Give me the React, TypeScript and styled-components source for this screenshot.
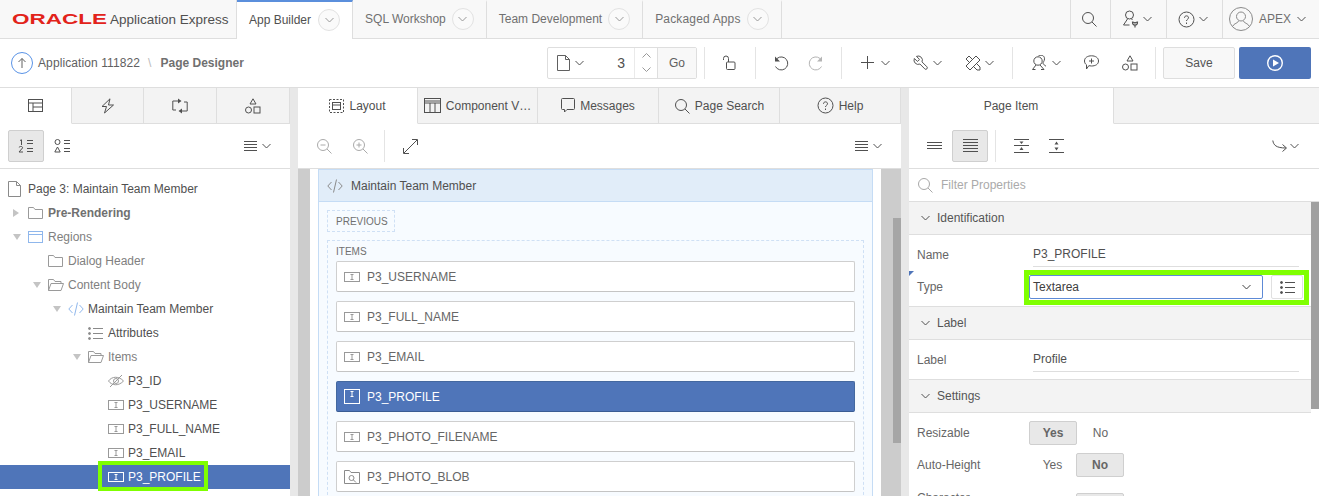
import React from 'react'
import styled, { createGlobalStyle } from 'styled-components'

const GlobalStyle = createGlobalStyle`
html, body { margin:0; padding:0; }
body {
  width:1319px;
  height:496px;
  overflow:hidden;
  background:#fff;
  font-family:"Liberation Sans", Arial, sans-serif;
  font-size:12px;
  color:#404040;
}
* { box-sizing:border-box; }
`

const BLUE = '#4f75b9'
const LIME = '#7fff00'

/* ---------- icons ---------- */
type IcoProps = { w?: number; h?: number; c?: string; children?: React.ReactNode }
const Ico = ({ w = 16, h = 16, c = '#505050', children }: IcoProps) => (
  <svg width={w} height={h} viewBox={`0 0 ${w} ${h}`} fill="none" stroke={c} strokeWidth={1} style={{ display: 'block', flex: 'none' }}>
    {children}
  </svg>
)
type C = { c?: string }
const Chevron = ({ c = '#505050' }: C) => <Ico w={9} h={6} c={c}><path d="M.5 1 4.5 5 8.500 1" /></Ico>
const SearchIco = ({ c = '#505050' }: C) => <Ico c={c}><circle cx="7" cy="7" r="5.500" /><path d="M11 11l4.500 4.500" /></Ico>
const HelpIco = () => <Ico w={17} h={17}><circle cx="8.500" cy="8.500" r="7.500" /><path d="M6.500 6.800c0-2.600 4-2.600 4 0 0 1.500-2 1.500-2 3.200" /><path d="M8.500 11.500v1.500" /></Ico>
const UserServiceIco = () => (
  <Ico w={16} h={18}>
    <circle cx="6.500" cy="5" r="4" /><path d="M4.500 9 .5 15h6M8.500 9l1 1" />
    <path d="M9.500 12c0 2 .8 3.200 2.500 3.200s2.500-1.200 2.500-3.200c-1 0-1.500.3-2.500 1-1-.7-1.500-1-2.500-1zM12 15v2.500" strokeWidth={1.200} />
  </Ico>
)
const AvatarIco = () => (
  <Ico w={24} h={24} c="#8a8a8a">
    <circle cx="12" cy="12" r="11.500" /><circle cx="12" cy="9.500" r="4.500" />
    <path d="M9.500 14c0 2-5 2.500-5.500 5M14.500 14c0 2 5 2.500 5.500 5" />
  </Ico>
)
const UpCircleIco = () => (
  <Ico w={22} h={22} c="#5a93e6">
    <circle cx="11" cy="11" r="10.500" /><path d="M11 16V6.500M7.500 10l3.500-3.500 3.500 3.500" stroke="#606060" />
  </Ico>
)
const PageIco = ({ c = '#606060' }: C) => <Ico w={13} h={16} c={c}><path d="M.5.500h8l4 4v11H.500zM8.500.500v4h4" /></Ico>
const LockIco = () => <Ico><path d="M1.500 5V3.500a2.500 2.500 0 0 1 5 0V7" /><rect x="4.500" y="7" width="8.500" height="7.500" rx="1" /></Ico>
const UndoIco = ({ c = '#505050' }: C) => <Ico c={c}><path d="M4 3.500a6.500 6.500 0 1 1-1.500 8" /><path d="M2 1.500v5h5z" fill={c} stroke="none" /></Ico>
const RedoIco = ({ c = '#505050' }: C) => <Ico c={c}><path d="M12 3.500a6.500 6.500 0 1 0 1.500 8" /><path d="M14 1.500v5H9z" fill={c} stroke="none" /></Ico>
const PlusIco = () => <Ico w={16} h={13}><path d="M6.500 0v13M0 6.500h13" /></Ico>
const WrenchIco = () => (
  <Ico>
    <g transform="translate(16.400 -.4) scale(-.7 .7)" strokeWidth={1.400}>
      <path d="M14.700 6.300a1 1 0 0 0 0 1.400l1.600 1.600a1 1 0 0 0 1.400 0l3.770-3.770a6 6 0 0 1-7.940 7.940l-6.910 6.910a2.120 2.120 0 0 1-3-3l6.910-6.910a6 6 0 0 1 7.940-7.940l-3.760 3.760z" />
    </g>
  </Ico>
)
const DrawIco = () => (
  <Ico>
    <path d="M11 1l4 4L5 15l-4-4z" />
    <path d="M4.500 7.500 1 4l3-3 3.500 3.500M11.500 8.500 15 12v3h-3L8.500 11.500" />
  </Ico>
)
const PeopleIco = () => (
  <Ico w={16} h={16}>
    <circle cx="6" cy="6" r="4.200" /><path d="M4 10 .5 14.500h3M8 10l4 4.500H9" />
    <path d="M6.500.800c3-1 6-.5 6 3 0 2.500-1.500 3-1.500 4.500 0 1 1.500 1.500 3 3" />
  </Ico>
)
const CommentAddIco = () => (
  <Ico w={15} h={15}>
    <path d="M7.500.800c3.800 0 7 1.800 7 5.200s-3.200 5-7 5c-.9 0-1.800-.1-2.700-.3L2.500 14V9.800C1.300 9 .5 7.700.5 6 .5 2.600 3.700.800 7.500.800z" />
    <path d="M7.500 3.500v5M5 6h5" />
  </Ico>
)
const ShapesIco = ({ c = '#505050' }: C) => (
  <Ico w={16} h={16} c={c}><path d="M8 .800 11 6H5z" /><circle cx="3.500" cy="12" r="3" /><rect x="9" y="9" width="6" height="6" /></Ico>
)
const TreeTabIco = () => <Ico w={15} h={13}><rect x=".5" y=".5" width="14" height="12" /><path d="M.5 4h14M5 4v8.500M5 8h9.500" /></Ico>
const BoltIco = () => <Ico w={14} h={16}><path d="M9 .800 1 8.500h4.500L3.500 15l9-8H7.500z" /></Ico>
const ProcessIco = () => (
  <Ico w={16} h={16}>
    <path d="M6 3H.800v9H4M10 13h5.200V4H12" />
    <path d="M6 .500 9.500 3 6 5.500zM10 10.500 6.500 13l3.500 2.500z" fill="#505050" stroke="none" />
  </Ico>
)
const NumberListIco = () => (
  <Ico w={16} h={14}>
    <path d="M2 1.500 3.500.800v5.200M9 1.500h6M9 4.500h6M1 8.500c.5-1.500 4-1.500 3.500.5L1 13h4M9 9.500h6M9 12.500h6" />
  </Ico>
)
const TypeListIco = () => (
  <Ico w={16} h={14}>
    <circle cx="3.500" cy="3" r="2.500" /><path d="M3.500 8 .8 13h5.400zM10 1.500h6M10 4.500h6M10 9.500h6M10 12.500h6" />
  </Ico>
)
const MenuIco = () => <Ico w={13} h={11}><path d="M0 .5h13M0 3.500h13M0 6.500h13M0 9.500h13" /></Ico>
const ZoomIco = ({ plus }: { plus?: boolean }) => (
  <Ico c="#aaaaaa"><circle cx="7" cy="7" r="5.500" /><path d="M11 11l4.500 4.500M4.500 7h5" />{plus && <path d="M7 4.500v5" />}</Ico>
)
const ExpandIco = () => <Ico w={15} h={15}><path d="M1 14 14 1M9 .500h5.500V6M.5 9v5.500H6" /></Ico>
const LayoutIco = () => <Ico w={15} h={14}><rect x=".5" y=".5" width="14" height="13" strokeDasharray="2 1.500" /><rect x="3.500" y="3.500" width="8" height="7" /><path d="M3.500 6h8" /></Ico>
const GridIco = () => <Ico w={17} h={15}><rect x=".5" y=".5" width="16" height="14" /><path d="M.5 3h16M.5 5h16M6 5v9.500M11 5v9.500" /></Ico>
const MessageIco = () => <Ico w={14} h={15}><path d="M1.500.500h11a1 1 0 0 1 1 1v9a1 1 0 0 1-1 1H6L3.500 14v-2.500h-2a1 1 0 0 1-1-1v-9a1 1 0 0 1 1-1z" /></Ico>
const HeightOneIco = () => <Ico w={15} h={8}><path d="M0 .5h15M0 3.500h15M0 6.500h15" /></Ico>
const HeightTwoIco = () => <Ico w={15} h={14}><path d="M0 .5h15M0 3.500h15M0 6.500h15M0 9.500h15M0 12.500h15" /></Ico>
const CollapseIco = () => (
  <Ico w={15} h={14}><path d="M0 .5h15M0 6.500h15M0 13.500h15" /><path d="M7.500 5 5.500 2.500h4zM7.500 8l2 3h-4z" fill="#505050" stroke="none" /></Ico>
)
const ExpandAllIco = () => (
  <Ico w={15} h={14}><path d="M0 .5h15M0 13.500h15" /><path d="M7.500 2.500l2 3h-4zM7.500 11.500l-2-3h4z" fill="#505050" stroke="none" /></Ico>
)
const GotoIco = () => <Ico w={15} h={13}><path d="M.8.500C1.500 5 4 8 14 8M10.500 4.500 14.500 8l-4 3.500" /></Ico>
const CodeIco = ({ c = '#8fb7ec' }: C) => <Ico w={16} h={16} c={c}><path d="M4.500 4 .8 8l3.700 4M11.500 4l3.700 4-3.700 4M9.500 1.500l-3 13" /></Ico>
const FolderIco = () => <Ico w={15} h={12} c="#9a9a9a"><path d="M.5 11.500V.500h5l1.500 2h7.500v9z" /></Ico>
const FolderOpenIco = () => <Ico w={16} h={12} c="#9a9a9a"><path d="M.5 11.500V.500h5l1.500 2h6v2M.5 11.500l2.500-7h12.500l-2.500 7z" /></Ico>
const RegionIco = () => <Ico w={15} h={12} c="#8fb7ec"><rect x=".5" y=".5" width="14" height="11" /><path d="M.5 3.500h14" /></Ico>
const AttributesIco = ({ c = '#8a8a8a' }: C) => (
  <Ico w={15} h={13} c={c}>
    <path d="M5 1.500h10M5 6.500h10M5 11.500h10" />
    <circle cx="1.500" cy="1.500" r="1" fill={c} /><circle cx="1.500" cy="6.500" r="1" fill={c} /><circle cx="1.500" cy="11.500" r="1" fill={c} />
  </Ico>
)
const HiddenIco = () => (
  <Ico w={16} h={12} c="#9a9a9a"><path d="M.5 6C4 1 11 1 15.500 6 11 11 4 11 .500 6z" /><circle cx="8" cy="6" r="2.500" /><path d="M2 12 14 0" /></Ico>
)
const ItemIco = ({ c = '#999999' }: C) => (
  <Ico w={16} h={10} c={c}><rect x=".5" y=".5" width="15" height="9" /><path d="M6.500 2.500h3M8 2.500v5M6.500 7.500h3" /></Ico>
)
const ItemTallIco = () => (
  <Ico w={16} h={15} c="#ffffff"><rect x=".5" y=".5" width="15" height="14" /><path d="M6.500 2.500h3M8 2.500v5M6.500 7.500h3" /></Ico>
)
const PopupIco = () => (
  <Ico w={16} h={14} c="#8a8a8a"><path d="M.5 13.500V.500h5l1.500 2h8.500v11z" /><circle cx="7.500" cy="8" r="2.500" /><path d="M9.500 10l2.500 2.500" /></Ico>
)

/* ---------- top bar ---------- */
const TopBar = styled.div`
display:flex;
height:39px;
background:#f8f8f8;
border-bottom:1px solid #dedede;
`
const Brand = styled.div`
width:237px;
display:flex;
align-items:center;
padding-left:12px;
border-right:1px solid #dedede;
`
const OracleMark = styled.span`
display:inline-block;
width:65px;
margin-right:33px;
font-size:15.5px;
font-weight:bold;
line-height:1;
color:#e2231a;
transform:scaleX(1.45);
transform-origin:left center;
`
const ProductName = styled.span`
font-size:13.5px;
color:#505050;
white-space:nowrap;
`
const NavTab = styled.div<{ $active?: boolean; $wide?: boolean }>`
display:flex;
align-items:center;
gap:${({ $active }) => ($active ? 7 : 6)}px;
padding:0 12px;
letter-spacing:${({ $wide }) => ($wide ? '.16px' : 'normal')};
color:${({ $active }) => ($active ? '#505050' : '#707070')};
background:${({ $active }) => ($active ? '#fff' : 'transparent')};
border-right:1px solid #dedede;
border-top:2px solid ${({ $active }) => ($active ? '#5b8fdc' : 'transparent')};
height:${({ $active }) => ($active ? '39px' : '38px')};
padding-bottom:2px;
`
const CircleChevron = styled.span`
width:22px;
height:22px;
border-radius:50%;
border:1px solid #e2e2e2;
background:#fafafa;
display:flex;
align-items:center;
justify-content:center;
`
const NavTools = styled.div`
margin-left:auto;
display:flex;
`
const NavTool = styled.div<{ $w: number; $pr?: number }>`
width:${({ $w }) => $w}px;
border-left:1px solid #dedede;
display:flex;
align-items:center;
justify-content:center;
gap:4px;
padding-right:${({ $pr }) => $pr ?? 3}px;
`
const UserName = styled.span`
margin:0 2px;
color:#707070;
`

/* ---------- main toolbar ---------- */
const Toolbar = styled.div`
display:flex;
align-items:center;
justify-content:space-between;
height:49px;
padding:0 8px 1px 11px;
border-bottom:1px solid #dedede;
background:#fff;
`
const Crumbs = styled.div`
display:flex;
align-items:center;
color:#606060;
`
const CrumbLink = styled.span`
margin-left:5px;
letter-spacing:.1px;
`
const CrumbSep = styled.span`
margin:0 9px 0 8px;
color:#bbb;
`
const CrumbCurrent = styled.span`
font-weight:bold;
color:#707070;
`
const Actions = styled.div`
display:flex;
align-items:center;
`
const PageGroup = styled.div`
display:flex;
width:150px;
height:32px;
border:1px solid #dedede;
border-radius:2px;
margin-right:7px;
`
const PagePicker = styled.div`
width:86px;
display:flex;
align-items:center;
gap:5px;
padding-left:9px;
`
const PageNumber = styled.span`
margin-left:auto;
padding-right:9px;
font-size:14px;
color:#505050;
`
const Spinner = styled.div`
width:24px;
border-left:1px solid #eaeaea;
border-right:1px solid #dedede;
display:flex;
flex-direction:column;
align-items:center;
justify-content:center;
gap:9px;
`
const GoButton = styled.div`
flex:1;
background:#f8f8f8;
display:flex;
align-items:center;
justify-content:center;
color:#606060;
`
const VRule = styled.span<{ $h?: number; $ml?: number }>`
width:1px;
height:${({ $h }) => $h ?? 32}px;
margin-left:${({ $ml }) => $ml ?? 0}px;
background:#e4e4e4;
flex:none;
`
const ToolSection = styled.div<{ $w: number; $pad?: number; $gap?: number; $center?: boolean }>`
width:${({ $w }) => $w}px;
display:flex;
align-items:center;
justify-content:${({ $center }) => ($center ? 'center' : 'flex-start')};
padding-left:${({ $pad }) => $pad ?? 0}px;
gap:${({ $gap }) => $gap ?? 0}px;
`
const ToolButton = styled.span<{ $w?: number }>`
display:flex;
align-items:center;
justify-content:center;
gap:4px;
width:${({ $w }) => ($w ? `${$w}px` : 'auto')};
`
const SaveButton = styled.div`
width:72px;
height:32px;
margin-left:7px;
background:#f8f8f8;
border:1px solid #dedede;
border-radius:2px;
display:flex;
align-items:center;
justify-content:center;
color:#555;
`
const RunButton = styled.div`
width:72px;
height:32px;
margin-left:4px;
background:${BLUE};
border-radius:2px;
display:flex;
align-items:center;
justify-content:center;
`

/* ---------- panels ---------- */
const Workspace = styled.div`
display:grid;
grid-template-columns:290px 8px 603px 8px 410px;
height:408px;
overflow:hidden;
`
const Gutter = styled.div`
background:#e8e8e8;
`
const Panel = styled.div`
position:relative;
display:flex;
flex-direction:column;
min-width:0;
height:408px;
overflow:hidden;
background:#fff;
`
const TabStrip = styled.div<{ $cols: string }>`
display:grid;
grid-template-columns:${({ $cols }) => $cols};
height:36px;
flex:none;
`
const PanelTab = styled.div<{ $active?: boolean }>`
display:flex;
align-items:center;
justify-content:center;
gap:5px;
min-width:0;
white-space:nowrap;
overflow:hidden;
color:#505050;
background:${({ $active }) => ($active ? '#fff' : '#f3f3f3')};
border-right:1px solid #dedede;
border-bottom:1px solid ${({ $active }) => ($active ? '#fff' : '#dedede')};
`
const EmptyTab = styled.div`
background:#f3f3f3;
border-bottom:1px solid #dedede;
`
const SubToolbar = styled.div<{ $pad?: number }>`
display:flex;
align-items:center;
height:45px;
flex:none;
padding:0 ${({ $pad }) => $pad ?? 19}px 0 8px;
border-bottom:1px solid #dedede;
`
const IconToggle = styled.div<{ $on?: boolean; $w?: number }>`
width:${({ $w }) => $w ?? 36}px;
height:32px;
flex:none;
display:flex;
align-items:center;
justify-content:center;
border-radius:2px;
background:${({ $on }) => ($on ? '#e8e8e8' : 'transparent')};
border:1px solid ${({ $on }) => ($on ? '#cfcfcf' : 'transparent')};
`
const PushRight = styled.div<{ $gap?: number }>`
margin-left:auto;
display:flex;
align-items:center;
gap:${({ $gap }) => $gap ?? 5}px;
`

/* ---------- tree ---------- */
const Tree = styled.div`
padding-top:8px;
`
const TreeRow = styled.div<{ $depth: number; $selected?: boolean; $tone?: string; $bold?: boolean }>`
position:relative;
display:flex;
align-items:center;
height:24px;
padding-left:${({ $depth }) => $depth * 20 + 8}px;
white-space:nowrap;
background:${({ $selected }) => ($selected ? BLUE : 'transparent')};
color:${({ $selected, $tone }) => ($selected ? '#fff' : $tone ?? '#505050')};
font-weight:${({ $bold }) => ($bold ? 'bold' : 'normal')};
`
const Disclosure = styled.span<{ $open?: boolean }>`
width:20px;
margin-left:-20px;
padding-left:5px;
flex:none;
display:flex;
&::before {
  content:'';
  display:block;
  ${({ $open }) =>
    $open
      ? 'border-left:4px solid transparent;border-right:4px solid transparent;border-top:6px solid #c4c4c4;'
      : 'border-top:4px solid transparent;border-bottom:4px solid transparent;border-left:6px solid #c4c4c4;'}
}
`
const TreeIcon = styled.span`
width:20px;
flex:none;
display:flex;
justify-content:flex-start;
`
const TreeHighlight = styled.span`
position:absolute;
left:98px;
top:-4px;
width:110px;
height:30px;
border:4px solid ${LIME};
`

/* ---------- canvas ---------- */
const Canvas = styled.div`
position:relative;
flex:1;
min-height:0;
display:flex;
background:#cccccc;
padding:0 20px 0 12px;
`
const CanvasSheet = styled.div`
flex:1;
min-width:0;
background:#fff;
padding:0 8px;
`
const CanvasScroll = styled.div`
position:absolute;
right:0;
top:49px;
width:8px;
height:225px;
background:#a6a6a6;
`
const Region = styled.div`
border:1px solid #c5dcf5;
border-bottom:none;
background:#f7fbff;
height:330px;
`
const RegionHead = styled.div`
display:flex;
align-items:center;
gap:8px;
height:32px;
padding-left:8px;
background:#e1edf9;
border-bottom:1px solid #c5dcf5;
color:#505050;
`
const RegionBody = styled.div`
padding:8px 8px 0 8px;
`
const DropZone = styled.div`
border:1px dashed #cfe0f5;
padding:0 8px;
font-size:10px;
color:#707070;
`
const PreviousZone = styled(DropZone)`
display:inline-flex;
align-items:center;
height:22px;
width:68px;
margin-bottom:8px;
`
const ItemsZone = styled(DropZone)`
display:block;
height:260px;
border-bottom:none;
`
const ZoneLabel = styled.div`
height:20px;
line-height:21px;
`
const ItemCard = styled.div<{ $selected?: boolean }>`
display:flex;
align-items:center;
gap:7px;
height:31px;
margin-bottom:9px;
padding-left:7px;
font-size:12px;
border-radius:2px;
background:${({ $selected }) => ($selected ? BLUE : '#fff')};
color:${({ $selected }) => ($selected ? '#fff' : '#666')};
border:1px solid ${({ $selected }) => ($selected ? '#44689f' : '#cfcfcf')};
border-bottom-color:${({ $selected }) => ($selected ? '#3a5c93' : '#c4c4c4')};
`

/* ---------- property editor ---------- */
const FilterRow = styled.div`
display:flex;
align-items:center;
gap:8px;
height:33px;
flex:none;
padding-left:8px;
color:#aaa;
border-bottom:1px solid #dedede;
`
const PropScroll = styled.div`
position:absolute;
right:0;
top:114px;
width:8px;
height:207px;
background:#a0a0a0;
`
const PropBody = styled.div`
padding-right:8px;
`
const SectionHead = styled.div`
display:flex;
align-items:center;
gap:7px;
height:33px;
padding-left:12px;
background:#f3f3f3;
border-bottom:1px solid #dedede;
color:#555;
`
const SectionBody = styled.div`
padding:4px 12px 3px 8px;
border-bottom:1px solid #dedede;
&:last-child { border-bottom:none; }
`
const PropRow = styled.div<{ $tall?: boolean }>`
position:relative;
display:flex;
align-items:center;
height:${({ $tall }) => ($tall ? 48 : 32)}px;
`
const PropLabel = styled.div`
width:112px;
flex:none;
color:#666;
line-height:14px;
`
const PropValue = styled.div`
flex:1;
margin-left:4px;
height:24px;
line-height:23px;
color:#505050;
border-bottom:1px solid #dedede;
`
const ChangedMark = styled.span`
position:absolute;
left:-8px;
top:0;
width:0;
height:0;
border-top:5px solid ${BLUE};
border-right:5px solid transparent;
`
const TypeControls = styled.div`
position:relative;
display:flex;
gap:8px;
`
const SelectBox = styled.div`
width:234px;
height:24px;
display:flex;
align-items:center;
justify-content:space-between;
padding:0 11px 0 3px;
border:1px solid #5d8ad6;
border-radius:2px;
color:#404040;
`
const ListButton = styled.div`
width:32px;
height:24px;
display:flex;
align-items:center;
justify-content:center;
border:1px solid #e0e0e0;
border-radius:2px;
`
const TypeHighlight = styled.span`
position:absolute;
left:-5px;
top:-5px;
width:285px;
height:35px;
border:5px solid ${LIME};
`
const Toggle = styled.div`
display:flex;
`
const ToggleOption = styled.div<{ $on?: boolean }>`
width:${({ $on }) => ($on ? 48 : 47)}px;
height:24px;
display:flex;
align-items:center;
justify-content:center;
border-radius:2px;
color:#666;
font-weight:${({ $on }) => ($on ? 'bold' : 'normal')};
background:${({ $on }) => ($on ? '#e8e8e8' : 'transparent')};
border:1px solid ${({ $on }) => ($on ? '#cfcfcf' : 'transparent')};
`

/* ---------- data ---------- */
const navTabs = [
  { label: 'SQL Workshop' },
  { label: 'Team Development' },
  { label: 'Packaged Apps', wide: true },
]
const cards = [
  { name: 'P3_USERNAME' },
  { name: 'P3_FULL_NAME' },
  { name: 'P3_EMAIL' },
  { name: 'P3_PROFILE', selected: true },
  { name: 'P3_PHOTO_FILENAME' },
  { name: 'P3_PHOTO_BLOB', popup: true },
]

const Section = ({ title }: { title: string }) => (
  <SectionHead><Chevron />{title}</SectionHead>
)

const YesNo = ({ yes }: { yes: boolean }) => (
  <Toggle>
    <ToggleOption $on={yes}>Yes</ToggleOption>
    <ToggleOption $on={!yes}>No</ToggleOption>
  </Toggle>
)

const App = (): JSX.Element => {
  return (
    <>
      <GlobalStyle />
      <TopBar>
        <Brand><OracleMark>ORACLE</OracleMark><ProductName>Application Express</ProductName></Brand>
        <NavTab $active>App Builder<CircleChevron><Chevron c="#999" /></CircleChevron></NavTab>
        {navTabs.map(t => (
          <NavTab key={t.label} $wide={t.wide}>{t.label}<CircleChevron><Chevron c="#999" /></CircleChevron></NavTab>
        ))}
        <NavTools>
          <NavTool $w={40}><SearchIco /></NavTool>
          <NavTool $w={56}><UserServiceIco /><Chevron /></NavTool>
          <NavTool $w={56}><HelpIco /><Chevron /></NavTool>
          <NavTool $w={97} $pr={7}><AvatarIco /><UserName>APEX</UserName><Chevron /></NavTool>
        </NavTools>
      </TopBar>

      <Toolbar>
        <Crumbs>
          <UpCircleIco />
          <CrumbLink>Application 111822</CrumbLink>
          <CrumbSep>\</CrumbSep>
          <CrumbCurrent>Page Designer</CrumbCurrent>
        </Crumbs>
        <Actions>
          <PageGroup>
            <PagePicker><PageIco /><Chevron /><PageNumber>3</PageNumber></PagePicker>
            <Spinner>
              <Ico w={9} h={5} c="#999"><path d="M.5 4.500 4.500.5l4 4" /></Ico>
              <Ico w={9} h={5} c="#999"><path d="M.5.500l4 4 4-4" /></Ico>
            </Spinner>
            <GoButton>Go</GoButton>
          </PageGroup>
          <VRule />
          <ToolSection $w={50} $center><LockIco /></ToolSection>
          <VRule />
          <ToolSection $w={85} $center>
            <ToolButton $w={35}><UndoIco /></ToolButton>
            <ToolButton $w={35}><RedoIco c="#b4b4b4" /></ToolButton>
          </ToolSection>
          <VRule />
          <ToolSection $w={170} $pad={19} $gap={23}>
            <ToolButton><PlusIco /><Chevron /></ToolButton>
            <ToolButton><WrenchIco /><Chevron /></ToolButton>
            <ToolButton><DrawIco /><Chevron /></ToolButton>
          </ToolSection>
          <VRule />
          <ToolSection $w={142} $pad={19} $gap={23}>
            <ToolButton><PeopleIco /><Chevron /></ToolButton>
            <ToolButton><CommentAddIco /></ToolButton>
            <ToolButton><ShapesIco /></ToolButton>
          </ToolSection>
          <VRule />
          <SaveButton>Save</SaveButton>
          <RunButton>
            <Ico w={16} h={16} c="#fff"><circle cx="8" cy="8" r="7.300" strokeWidth={1.400} /><path d="M6 4.500 12 8l-6 3.500z" fill="#fff" stroke="none" /></Ico>
          </RunButton>
        </Actions>
      </Toolbar>

      <Workspace>
        <Panel>
          <TabStrip $cols="72px 72px 73px 73px">
            <PanelTab $active><TreeTabIco /></PanelTab>
            <PanelTab><BoltIco /></PanelTab>
            <PanelTab><ProcessIco /></PanelTab>
            <PanelTab><ShapesIco /></PanelTab>
          </TabStrip>
          <SubToolbar>
            <IconToggle $on><NumberListIco /></IconToggle>
            <IconToggle><TypeListIco /></IconToggle>
            <PushRight><MenuIco /><Chevron /></PushRight>
          </SubToolbar>
          <Tree>
            <TreeRow $depth={0}><TreeIcon><PageIco c="#8a8a8a" /></TreeIcon>Page 3: Maintain Team Member</TreeRow>
            <TreeRow $depth={1} $tone="#707070" $bold><Disclosure /><TreeIcon><FolderIco /></TreeIcon>Pre-Rendering</TreeRow>
            <TreeRow $depth={1} $tone="#808080"><Disclosure $open /><TreeIcon><RegionIco /></TreeIcon>Regions</TreeRow>
            <TreeRow $depth={2} $tone="#808080"><TreeIcon><FolderIco /></TreeIcon>Dialog Header</TreeRow>
            <TreeRow $depth={2} $tone="#808080"><Disclosure $open /><TreeIcon><FolderOpenIco /></TreeIcon>Content Body</TreeRow>
            <TreeRow $depth={3}><Disclosure $open /><TreeIcon><CodeIco /></TreeIcon>Maintain Team Member</TreeRow>
            <TreeRow $depth={4}><TreeIcon><AttributesIco /></TreeIcon>Attributes</TreeRow>
            <TreeRow $depth={4} $tone="#808080"><Disclosure $open /><TreeIcon><FolderOpenIco /></TreeIcon>Items</TreeRow>
            <TreeRow $depth={5}><TreeIcon><HiddenIco /></TreeIcon>P3_ID</TreeRow>
            <TreeRow $depth={5}><TreeIcon><ItemIco /></TreeIcon>P3_USERNAME</TreeRow>
            <TreeRow $depth={5}><TreeIcon><ItemIco /></TreeIcon>P3_FULL_NAME</TreeRow>
            <TreeRow $depth={5}><TreeIcon><ItemIco /></TreeIcon>P3_EMAIL</TreeRow>
            <TreeRow $depth={5} $selected><TreeIcon><ItemIco c="#fff" /></TreeIcon>P3_PROFILE<TreeHighlight /></TreeRow>
            <TreeRow $depth={5}><TreeIcon><ItemIco /></TreeIcon>P3_PHOTO_FILENAME</TreeRow>
          </Tree>
        </Panel>
        <Gutter />

        <Panel>
          <TabStrip $cols="120px 120px 121px 121px 121px">
            <PanelTab $active><LayoutIco />Layout</PanelTab>
            <PanelTab><GridIco />Component V…</PanelTab>
            <PanelTab><MessageIco />Messages</PanelTab>
            <PanelTab><SearchIco />Page Search</PanelTab>
            <PanelTab><HelpIco />Help</PanelTab>
          </TabStrip>
          <SubToolbar>
            <IconToggle><ZoomIco /></IconToggle>
            <IconToggle $w={35}><ZoomIco plus /></IconToggle>
            <VRule $ml={7} />
            <IconToggle $w={50}><ExpandIco /></IconToggle>
            <PushRight><MenuIco /><Chevron /></PushRight>
          </SubToolbar>
          <Canvas>
            <CanvasSheet>
              <Region>
                <RegionHead><CodeIco c="#8a8a8a" />Maintain Team Member</RegionHead>
                <RegionBody>
                  <PreviousZone>PREVIOUS</PreviousZone>
                  <ItemsZone>
                    <ZoneLabel>ITEMS</ZoneLabel>
                    {cards.map(card => (
                      <ItemCard key={card.name} $selected={card.selected}>
                        {card.popup ? <PopupIco /> : card.selected ? <ItemTallIco /> : <ItemIco />}
                        {card.name}
                      </ItemCard>
                    ))}
                  </ItemsZone>
                </RegionBody>
              </Region>
            </CanvasSheet>
            <CanvasScroll />
          </Canvas>
        </Panel>
        <Gutter />

        <Panel>
          <TabStrip $cols="205px 1fr">
            <PanelTab $active>Page Item</PanelTab>
            <EmptyTab />
          </TabStrip>
          <SubToolbar $pad={20}>
            <IconToggle $w={35}><HeightOneIco /></IconToggle>
            <IconToggle $on><HeightTwoIco /></IconToggle>
            <VRule $ml={7} />
            <IconToggle $w={50}><CollapseIco /></IconToggle>
            <IconToggle $w={20}><ExpandAllIco /></IconToggle>
            <PushRight $gap={3}><GotoIco /><Chevron /></PushRight>
          </SubToolbar>
          <FilterRow><SearchIco c="#a8a8a8" />Filter Properties</FilterRow>
          <PropBody>
            <Section title="Identification" />
            <SectionBody>
              <PropRow><PropLabel>Name</PropLabel><PropValue>P3_PROFILE</PropValue></PropRow>
              <PropRow>
                <ChangedMark />
                <PropLabel>Type</PropLabel>
                <TypeControls>
                  <SelectBox>Textarea<Chevron c="#404040" /></SelectBox>
                  <ListButton><AttributesIco c="#505050" /></ListButton>
                  <TypeHighlight />
                </TypeControls>
              </PropRow>
            </SectionBody>
            <Section title="Label" />
            <SectionBody>
              <PropRow><PropLabel>Label</PropLabel><PropValue>Profile</PropValue></PropRow>
            </SectionBody>
            <Section title="Settings" />
            <SectionBody>
              <PropRow><PropLabel>Resizable</PropLabel><YesNo yes /></PropRow>
              <PropRow><PropLabel>Auto-Height</PropLabel><YesNo yes={false} /></PropRow>
              <PropRow $tall><PropLabel>Character<br />Counter</PropLabel><YesNo yes={false} /></PropRow>
            </SectionBody>
          </PropBody>
          <PropScroll />
        </Panel>
      </Workspace>
    </>
  )
}

export default App
